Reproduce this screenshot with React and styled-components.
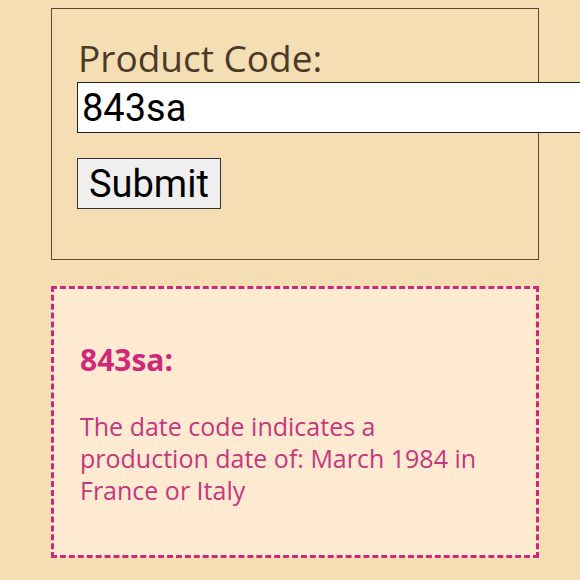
import React from 'react'
import styled, { createGlobalStyle } from 'styled-components'

const GlobalStyle = createGlobalStyle`
  body {
    margin: 0;
    background: #f5deb3;
    font-family: "Open Sans", Lato, sans-serif;
  }
`

const Page = styled.div`
  padding: 8px 41px 20px 51px;
  overflow: hidden;
`

const Form = styled.form`
  border: 1px solid #5a4632;
  padding: 29px 25px 50px;
  display: flex;
  flex-direction: column;
  align-items: flex-start;
`

const Label = styled.label`
  font-size: 37px;
  line-height: 40px;
  color: #4b3a28;
  margin-left: 1px;
`

const Input = styled.input`
  box-sizing: border-box;
  width: 530px;
  height: 51px;
  margin-top: 4px;
  font-family: Roboto, sans-serif;
  font-size: 38px;
  padding: 0 4px;
  border: 1px solid #222;
  background: #fff;
  color: #000;
`

const Button = styled.button`
  box-sizing: border-box;
  height: 51px;
  margin-top: 25px;
  padding: 0 11px;
  font-family: Roboto, sans-serif;
  font-size: 38px;
  background: #efefef;
  border: 1px solid #333;
  color: #000;
`

const Result = styled.div`
  margin-top: 26px;
  height: 272px;
  box-sizing: border-box;
  border: 3px dashed #cc2a78;
  background: #fdead0;
  padding: 54px 26px 0;
  color: #c4377f;
`

const Code = styled.h2`
  margin: 0;
  font-size: 30px;
  line-height: 34px;
  font-weight: 700;
  color: #d0287a;
`

const Text = styled.p`
  margin: 33px 0 0;
  font-size: 25px;
  line-height: 32px;
  width: 410px;
`

export default function App() {
  const [code, setCode] = React.useState('843sa')
  return (
    <Page>
      <GlobalStyle />
      <Form onSubmit={e => e.preventDefault()}>
        <Label htmlFor="code">Product Code:</Label>
        <Input id="code" value={code} onChange={e => setCode(e.target.value)} />
        <Button type="submit">Submit</Button>
      </Form>
      <Result>
        <Code>843sa:</Code>
        <Text>The date code indicates a production date of: March 1984 in France or Italy</Text>
      </Result>
    </Page>
  )
}
